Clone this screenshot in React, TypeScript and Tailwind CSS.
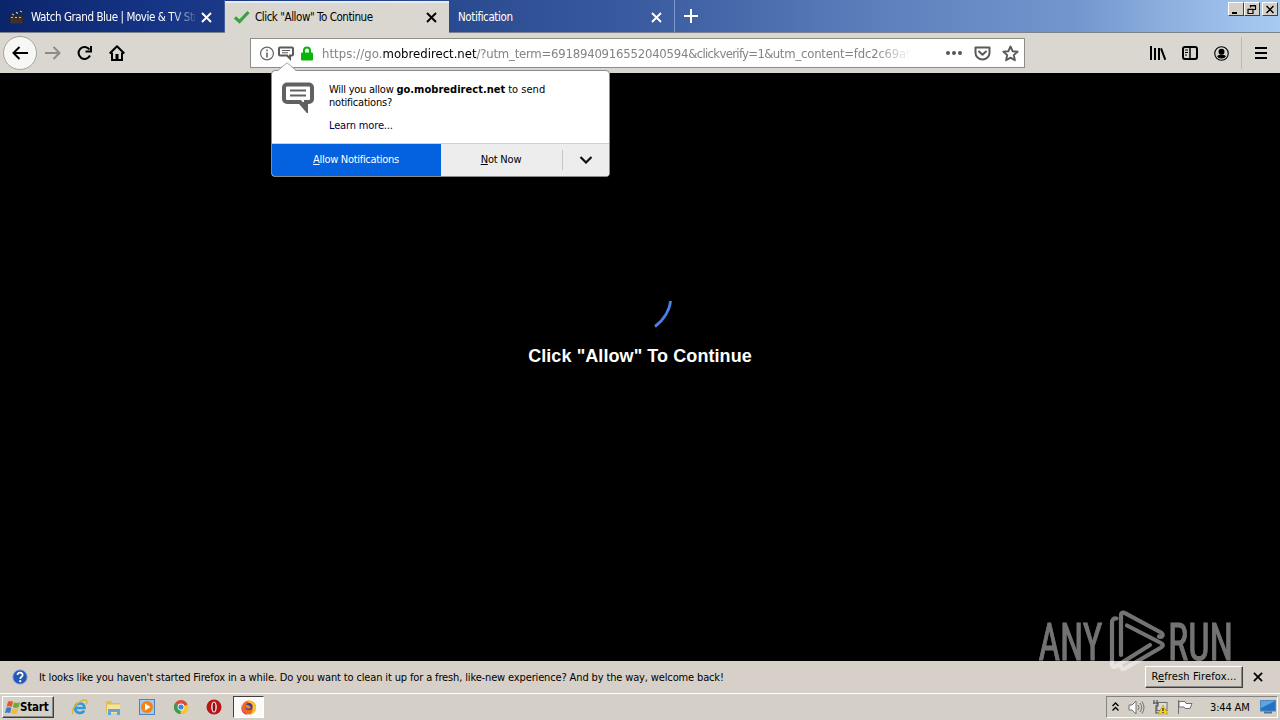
import React from 'react';

const UI = "font-['DejaVu_Sans_Condensed','DejaVu_Sans',sans-serif] [font-stretch:condensed]";

const CloseIcon: React.FC<{ className?: string }> = ({ className }) => (
  <svg className={className} width="11" height="11" viewBox="0 0 11 11" fill="none" stroke="currentColor" strokeWidth="1.9">
    <path d="M1 1l9 9M10 1l-9 9" />
  </svg>
);

const WindowButton: React.FC<{ children: React.ReactNode }> = ({ children }) => (
  <div className="flex h-[14px] w-4 items-center justify-center border border-t-white border-l-white border-r-[#404040] border-b-[#404040] bg-[#d4d0c8]">
    <svg width="12" height="11" viewBox="0 0 12 11" fill="none" stroke="#000" strokeWidth="1.5">
      {children}
    </svg>
  </div>
);

const TabStrip = () => (
  <div className="flex h-[33px] shrink-0 border-b border-[#7e828b] bg-[linear-gradient(90deg,#0b256b_0%,#163485_12%,#2a4a90_35%,#3a5ba0_50%,#5f82be_70%,#7396ce_84%,#9cc0ea_96%,#a6caf0_100%)]">
    <div className="flex h-full w-[225px] items-center border-r border-[#45609f] pt-[2px] pl-[10px]">
      <svg width="14" height="16" viewBox="0 0 14 16">
        <rect x="0" y="7" width="13" height="8" fill="#332b2b" />
        <path d="M0 5.5L12 1l1 2.5L1 7z" fill="#222" />
        <path d="M2 5l2 1M6 3.4l2 1M10 2l2 1M1 8.5h2M5 8.5h2M9 8.5h2" stroke="#b9c0cf" strokeWidth="1.2" />
        <path d="M1 11h11M1 13h11" stroke="#5b3525" />
      </svg>
      <span className="ml-[7px] w-[164px] overflow-hidden pt-px text-[11.5px] tracking-[-0.42px] whitespace-nowrap text-white [mask-image:linear-gradient(90deg,#000_85%,transparent_103%)]">
        Watch Grand Blue | Movie &amp; TV Stre
      </span>
      <CloseIcon className="ml-[6px] text-white" />
    </div>
    <div className="mt-px flex h-8 w-[224px] items-center border-t-2 border-[#e6ebf4] bg-[#dad7d1] pb-[2px] pl-[9px]">
      <svg width="16" height="14" viewBox="0 0 16 14" fill="none" stroke="#37a23f" strokeWidth="3.2">
        <path d="M1 7.5l4.5 4L14.5 2" />
      </svg>
      <span className="ml-[5px] w-[171px] pt-px text-[11.5px] tracking-[-0.45px] whitespace-nowrap text-black">Click "Allow" To Continue</span>
      <CloseIcon className="text-black" />
    </div>
    <div className="flex w-[226px] items-center border-r border-[#7f9bcb] pt-[2px] pl-[9px]">
      <span className="w-[193px] pt-px text-[11.5px] tracking-[-0.4px] text-white">Notification</span>
      <CloseIcon className="text-white" />
    </div>
    <svg className="mt-[9px] ml-[9px]" width="14" height="14" viewBox="0 0 14 14" stroke="#fff" strokeWidth="2">
      <path d="M7 0v14M0 7h14" />
    </svg>
    <div className="mt-[2px] mr-[2px] ml-auto flex">
      <WindowButton>
        <path d="M2 9h5" strokeWidth="2" />
      </WindowButton>
      <WindowButton>
        <path d="M4.5 3.5v-2h5v4h-2M4 1.8h6M2 5.5h5v4H2zM1.5 5.3h6" strokeWidth="1.2" />
      </WindowButton>
      <div className="ml-[2px]">
        <WindowButton>
          <path d="M2.5 2l7 7M9.5 2l-7 7" />
        </WindowButton>
      </div>
    </div>
  </div>
);

const Popup = () => (
  <div className="absolute top-[31px] left-5 w-[339px] rounded-[4px] border border-[#8b8b8b] bg-white text-[11px] text-black">
    <svg className="absolute -top-[9px] left-[5px]" width="20" height="10" viewBox="0 0 20 10">
      <path d="M0 9.5L1 9l9-8 9 8 1 .5V10H0z" fill="#fff" />
      <path d="M0 9L10 .8 20 9" fill="none" stroke="#a7a7a7" />
    </svg>
    <div className="flex h-[72px] pt-[11px] pl-[10px]">
      <svg width="32" height="31" viewBox="0 0 32 31" fill="none" stroke="#616161" strokeWidth="4">
        <path d="M5 2.5h22a3 3 0 013 3V17a3 3 0 01-3 3h-3v7l-6-7H5a3 3 0 01-3-3V5.500a3 3 0 013-3z" />
        <path d="M18 20h6v9z" fill="#616161" stroke="none" />
        <path d="M8 8.500h16M8 13.500h16" strokeWidth="2" />
      </svg>
      <div className="ml-[15px] pt-px leading-[13px] whitespace-nowrap">
        <p className="tracking-[-0.25px]">
          Will you allow <b className="tracking-[0.03px]">go.mobredirect.net</b> <span className="tracking-[0.02px]">to send</span>
        </p>
        <p className="tracking-[-0.22px]">notifications?</p>
        <p className="mt-[10px] tracking-[-0.15px] text-[#00004e]">Learn more...</p>
      </div>
    </div>
    <div className="flex h-[33px] overflow-hidden rounded-b-[3px] border-t border-[#cfcfcf] bg-[#ededed]">
      <div className="flex w-[169px] items-center justify-center bg-[#0461e0] pt-px pr-px tracking-[-0.3px] text-white">
        <span>
          <u>A</u>llow Notifications
        </span>
      </div>
      <div className="flex flex-1 items-center justify-center pt-px pr-px tracking-[-0.2px]">
        <span>
          <u>N</u>ot Now
        </span>
      </div>
      <div className="my-[6px] flex w-[47px] items-center justify-center border-l border-[#c4c4c4]">
        <svg width="14" height="8" viewBox="0 0 14 8" fill="none" stroke="#111" strokeWidth="2.2">
          <path d="M1.500 1L7 6.500 12.500 1" />
        </svg>
      </div>
    </div>
  </div>
);

const UrlBar = () => (
  <div className="relative ml-[125px] flex h-[30px] w-[775px] items-center border border-[#8f8d89] bg-white pl-[9px] text-[#606060]">
    <svg width="15" height="15" viewBox="0 0 15 15" fill="none" stroke="#666">
      <circle cx="7" cy="7.500" r="6.400" strokeWidth="1.200" />
      <path d="M7 3.500v1.800M7 6.500v5" strokeWidth="1.600" />
    </svg>
    <svg className="ml-[3px] mt-px" width="16" height="15" viewBox="0 0 16 15" fill="none" stroke="#5a5a5a" strokeWidth="2">
      <path d="M2 1.500h12c.6 0 1 .4 1 1v6c0 .6-.4 1-1 1h-2v3l-3-3H2c-.6 0-1-.4-1-1v-6c0-.6.4-1 1-1z" />
      <path d="M4 4.500h8M4 6.800h6" strokeWidth="1" />
    </svg>
    <svg className="ml-[7px]" width="12" height="15" viewBox="0 0 12 15">
      <rect y="6.500" width="12" height="8" rx="1" fill="#0ab50a" />
      <path d="M3 7.500V4.500a3 3 0 016 0v3" fill="none" stroke="#0ab50a" strokeWidth="2" />
    </svg>
    <span className="ml-[9px] w-[589px] overflow-hidden pt-px text-[13px] tracking-[-0.22px] whitespace-nowrap text-[#838383] [mask-image:linear-gradient(90deg,#000_94%,transparent_100%)]">
      <span className="tracking-[0.05px]">https://go.</span>
      <span className="tracking-[0px] text-black">mobredirect.net</span>/?utm_term=6918940916552040594<span className="tracking-[-0.68px]">&amp;clickverify=1&amp;</span>utm_content=fdc2c69a95
    </span>
    <svg className="ml-[34px]" width="18" height="6" viewBox="0 0 18 6" fill="#555">
      <circle cx="3" cy="3" r="2" />
      <circle cx="9" cy="3" r="2" />
      <circle cx="15" cy="3" r="2" />
    </svg>
    <svg className="ml-[11px]" width="17" height="15" viewBox="0 0 17 15" fill="none" stroke="#5a5a5a" strokeWidth="2" strokeLinejoin="round">
      <path d="M1.500 1.500h14v5.500a7 6.500 0 01-14 0z" />
      <path d="M5 5.500l3.500 3.200L12 5.500" strokeLinecap="round" />
    </svg>
    <svg className="ml-[11px]" width="17" height="17" viewBox="0 0 17 17" fill="none" stroke="#5a5a5a" strokeWidth="1.900" strokeLinejoin="round">
      <path d="M8.500 1.500l2.100 4.700 5 .5-3.800 3.400 1.100 5.100-4.400-2.600-4.400 2.600 1.100-5.100L1.400 6.700l5-.5z" />
    </svg>
    <Popup />
  </div>
);

const NavBar = () => (
  <div className="relative z-10 flex h-10 shrink-0 items-center bg-[#dad7d1] pl-[3px]">
    <div className="flex h-[34px] w-[34px] items-center justify-center rounded-full border border-[#a5a39e] bg-[#f7f7f5]">
      <svg width="16" height="14" viewBox="0 0 16 14" fill="none" stroke="#000" strokeWidth="2">
        <path d="M16 7H1.500M7.500 1l-6 6 6 6" />
      </svg>
    </div>
    <svg className="ml-2" width="16" height="14" viewBox="0 0 16 14" fill="none" stroke="#8e8b87" strokeWidth="2">
      <path d="M0 7h14.500M8.500 1l6 6-6 6" />
    </svg>
    <svg className="ml-4" width="16" height="16" viewBox="0 0 16 16" fill="none" stroke="#000" strokeWidth="2">
      <path d="M13 10.500A6 6 0 1 1 12.500 4.500" />
      <path d="M15 1v6.500H8.500v-2H13V1z" fill="#000" stroke="none" />
    </svg>
    <svg className="ml-4" width="16" height="16" viewBox="0 0 16 16" fill="none" stroke="#000" strokeWidth="2">
      <path d="M.7 8.500L8 1.300l7.300 7.200" strokeLinejoin="round" />
      <path d="M3 7.500v7.500h10V7.500" />
      <path d="M8 9v6" strokeWidth="3" />
    </svg>
    <UrlBar />
    <svg className="ml-[125px]" width="16" height="14" viewBox="0 0 16 14" stroke="#000" strokeWidth="2">
      <path d="M1 0v14M5 2v12M9 2v12M11 2.300l4.300 11.500" />
    </svg>
    <svg className="ml-4" width="16" height="14" viewBox="0 0 16 14" fill="none" stroke="#000" strokeWidth="2">
      <rect x="1" y="1" width="14" height="12" rx="2" />
      <path d="M8 1v12" strokeWidth="1.500" />
      <path d="M3 4h3M3 6.500h3M3 9h2" strokeWidth="1" />
    </svg>
    <svg className="ml-4" width="15" height="15" viewBox="0 0 16 16">
      <circle cx="8" cy="8" r="7.200" fill="none" stroke="#000" strokeWidth="1.200" />
      <circle cx="8" cy="6" r="3.200" />
      <path d="M3.200 10.800c1.200-1.100 2.800-1.500 4.800-1.500s3.600.4 4.800 1.500A5.200 5.200 0 018 13.400a5.200 5.200 0 01-4.800-2.600z" />
    </svg>
    <div className="ml-3 h-8 w-px bg-[#bcb9b4]" />
    <svg className="ml-[13px]" width="12" height="12" viewBox="0 0 12 12" stroke="#000" strokeWidth="2">
      <path d="M0 1h12M0 6h12M0 11h12" />
    </svg>
  </div>
);

const Watermark = () => (
  <svg className="pointer-events-none absolute right-[48px] bottom-[46px] z-20 opacity-45" width="194" height="66" viewBox="0 0 194 66" fill="none" stroke="#fff">
    <g fill="#fff" strokeWidth="1" fontSize="52" fontFamily="Roboto, sans-serif">
      <text x="0.500" y="51.500" textLength="64" lengthAdjust="spacingAndGlyphs">ANY</text>
      <text x="130" y="51.500" textLength="65" lengthAdjust="spacingAndGlyphs">RUN</text>
    </g>
    <g strokeWidth="4.200" strokeLinejoin="round" strokeLinecap="round">
      <path d="M78.500 10.500c-3-.5-4.500 1-4.500 4V56c0 3 2 3.500 4 2.300L112 37" />
      <path d="M83 47V7.500c0-3 2-3.500 4.500-2.200L123 24.500c3 2 1.500 5.500-2 4" />
      <path d="M89 17.500L123 35c2.500 1.300 2.500 3 0 4.500L87 60.500c-2.500 1.300-4 .5-4-2" />
    </g>
  </svg>
);

const Viewport = () => (
  <main className="flex flex-1 flex-col items-center bg-black pt-[195px]">
    <svg width="64" height="64" viewBox="0 0 64 64" fill="none" stroke="#4a7fe6" strokeWidth="2.800">
      <path d="M62.500 33c-.5 8-6 18.500-15.500 25.500" />
    </svg>
    <h1 className="mt-3 font-['Liberation_Sans',sans-serif] text-[18px] leading-6 font-bold tracking-[0.08px] text-white">Click "Allow" To Continue</h1>
  </main>
);

const NotificationBar = () => (
  <div className="flex h-8 shrink-0 items-center bg-[#d7d0c8] pl-3 text-[11px] text-black">
    <svg width="16" height="16" viewBox="0 0 16 16">
      <circle cx="8" cy="8" r="7.300" fill="#2458b8" stroke="#9eb4dc" />
      <path d="M5.500 6c0-3.500 5.200-3 5.200 0 0 1.800-2.500 1.800-2.500 4" fill="none" stroke="#fff" strokeWidth="1.700" />
      <circle cx="8.200" cy="12.200" r="1.100" fill="#fff" />
    </svg>
    <span className="ml-[11px] pt-[2px] tracking-[-0.14px] whitespace-nowrap">
      It looks like you haven't started Firefox in a while. Do you want to clean it up for a fresh, like-new experience? And by the way, welcome back!
    </span>
    <div className="mr-[10px] ml-auto flex h-[22px] w-[98px] items-center justify-center border border-t-white border-l-white border-r-[#404040] border-b-[#404040] bg-[#d4d0c8] tracking-[0.14px] shadow-[inset_-1px_-1px_0_#888]">
      <span>
        R<u>e</u>fresh Firefox...
      </span>
    </div>
    <CloseIcon className="mr-[17px] h-[10px] w-[10px]" />
  </div>
);

const Taskbar = () => (
  <div className="flex h-[27px] shrink-0 items-center border-t border-white bg-[#d4d0c8] pl-[2px] text-black">
    <div className="flex h-[22px] w-[52px] items-center border border-t-white border-l-white border-r-[#404040] border-b-[#404040] pl-[2px] shadow-[inset_-1px_-1px_0_#888]">
      <svg className="shrink-0" width="16" height="15" viewBox="0 0 16 15">
        <path d="M3 1.500c2-1 3.500-.6 5 .3L6.700 7c-1.600-1-3.200-1-5-.3z" fill="#e2592b" />
        <path d="M9 2.300c2 1 3.600.8 6 0L13.600 7.200c-2 .9-3.600.9-5.800 0z" fill="#72ac36" />
        <path d="M1.400 7.700c2-.9 3.500-.6 5 .3L5 13.200c-1.600-1-3-1-5-.3z" fill="#3b79ca" />
        <path d="M7.400 8.400c2 1 3.600.8 6 0L12 13.300c-2 .9-3.600.9-5.800 0z" fill="#f3bd31" />
      </svg>
      <b className="-ml-px pt-px text-[11.5px] tracking-[-0.2px]">Start</b>
    </div>
    <svg className="ml-[17px]" width="17" height="17" viewBox="0 0 17 17" fill="none">
      <path d="M4 9h9.500c0-6-9-6-9.500 0 0 5.500 7 6.500 9 2.500" stroke="#329bd6" strokeWidth="2.700" />
      <path d="M2 15C-1 11 8 1 14 1c3 0 2 3 1 4" stroke="#dfb52d" strokeWidth="1.300" />
    </svg>
    <svg className="ml-[17px]" width="17" height="17" viewBox="0 0 17 17">
      <path d="M1 2h5l1 2h8v10H1z" fill="#e3bc58" />
      <path d="M2 5.500h13V14H2z" fill="#f7e29a" />
      <path d="M3 10h12v6h-3v-3H6v3H3z" fill="#62a6d5" />
    </svg>
    <svg className="ml-[17px]" width="17" height="17" viewBox="0 0 17 17">
      <rect x=".5" y=".5" width="15" height="15" fill="#a7c8ea" stroke="#4c84be" />
      <circle cx="8" cy="8" r="6" fill="#ef8518" />
      <path d="M6 4.500L11.500 8 6 11.500z" fill="#fff" />
    </svg>
    <svg className="ml-[17px]" width="16" height="16" viewBox="0 0 16 16">
      <circle cx="8" cy="8" r="7" fill="#dc4a38" />
      <path d="M8 8L1.900 4.500A7 7 0 007.500 15l3.500-5z" fill="#2fa14f" />
      <path d="M8 8l7-2.500A7 7 0 017.500 15z" fill="#f6c928" />
      <circle cx="8" cy="8" r="3.400" fill="#fff" />
      <circle cx="8" cy="8" r="2.600" fill="#4381e6" />
    </svg>
    <svg className="ml-[17px]" width="16" height="16" viewBox="0 0 16 16">
      <circle cx="8" cy="8" r="7.500" fill="#b91514" />
      <ellipse cx="8" cy="8" rx="2.800" ry="5.600" fill="#eee" />
      <ellipse cx="8" cy="8" rx="1.400" ry="4.500" fill="#8c1010" />
    </svg>
    <div className="ml-[11px] flex h-[22px] w-[31px] items-center justify-center border border-t-[#404040] border-l-[#404040] border-r-white border-b-white bg-[#fbfafa]">
      <svg width="16" height="16" viewBox="0 0 16 16">
        <circle cx="8" cy="8.500" r="7" fill="#f06a1d" />
        <path d="M6 2c4-2 10 3 9 8-1 4-4 5.500-6 5.500 4-3 4-9-3-13.500z" fill="#fcc32b" />
        <path d="M1 5c0 6 1 9 6 10.500-4 .5-7-3-6.500-7z" fill="#e22850" />
        <circle cx="8" cy="7.500" r="3.600" fill="#3d3f9e" />
        <path d="M4 6c3-1 4 1 6 2-2 3-5 2-6-2z" fill="#f58220" />
      </svg>
    </div>
    <div className="mr-[2px] ml-auto flex h-[22px] w-[172px] items-center border border-t-[#858585] border-l-[#858585] border-r-white border-b-white pl-[5px]">
      <svg width="7" height="10" viewBox="0 0 7 10" fill="none" stroke="#000" strokeWidth="1.400">
        <path d="M.5 4l3-3 3 3M.5 8.500l3-3 3 3" />
      </svg>
      <svg className="ml-[9px]" width="17" height="15" viewBox="0 0 17 15" fill="none" stroke="#707070">
        <path d="M1 5h3l4-4v13l-4-4H1z" fill="#fff" />
        <path d="M10 5q2 2.500 0 5M12 3q3.500 4.500 0 9M14 1.500q4 6 0 12" />
      </svg>
      <svg className="ml-[7px]" width="17" height="16" viewBox="0 0 17 16">
        <rect x="5" y="3.500" width="10" height="8" fill="#d9dde0" stroke="#6d6d6d" />
        <path d="M2 1v4M5 1v4M1 4h5v3H4v7h4" fill="none" stroke="#555" strokeWidth="1.200" />
        <path d="M11 6l5 9H6z" fill="#f9d318" stroke="#b39414" strokeWidth=".6" />
        <path d="M11 9v3M11 13v1" stroke="#222" strokeWidth="1.200" />
      </svg>
      <svg className="ml-[8px]" width="16" height="16" viewBox="0 0 16 16" fill="#fff" stroke="#707070">
        <path d="M1.500 1v14M2 2.500h6l1 2h6l-2 5H8l-1-1.500H2z" />
      </svg>
      <span className="ml-[17px] pt-[2px] text-[11px] tracking-[-0.15px] whitespace-nowrap">3:44 AM</span>
      <svg className="mr-[1px] ml-auto" width="16" height="14" viewBox="0 0 16 14">
        <rect x=".5" y=".5" width="15" height="10.500" fill="#2471c8" stroke="#5088bc" />
        <path d="M1 1h14L1 8z" fill="#5fa4e2" />
        <path d="M4 12.500h8" stroke="#4c7296" strokeWidth="2" />
      </svg>
    </div>
  </div>
);

export default function App() {
  return (
    <div className={`relative flex h-[720px] w-[1280px] flex-col overflow-hidden bg-black ${UI}`}>
      <TabStrip />
      <NavBar />
      <Viewport />
      <NotificationBar />
      <Taskbar />
      <Watermark />
    </div>
  );
}
